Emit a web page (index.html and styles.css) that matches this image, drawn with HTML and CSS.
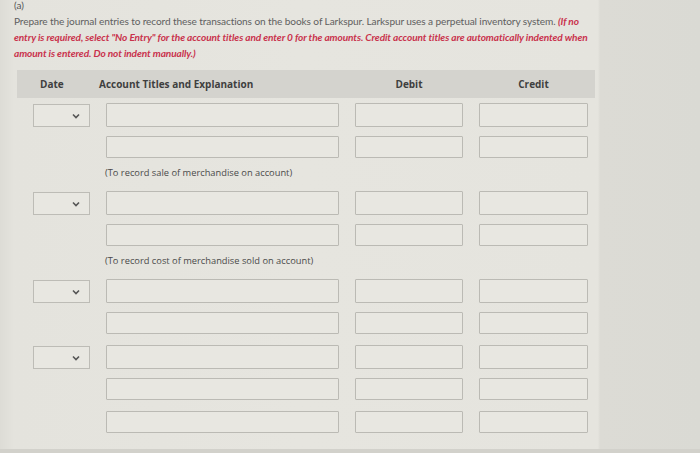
FILE: index.html
```html
<!DOCTYPE html>
<html>
<head>
<meta charset="utf-8">
<link rel="stylesheet" href="styles.css">
</head>
<body>
<div class="screen">
  <div class="page">
    <div class="part">(a)</div>
    <p class="instr">Prepare the journal entries to record these transactions on the books of Larkspur. Larkspur uses a perpetual inventory system. <em>(If no entry is required, select "No Entry" for the account titles and enter 0 for the amounts. Credit account titles are automatically indented when amount is entered. Do not indent manually.)</em></p>

    <div class="journal">
      <div class="head">
        <span class="h-date">Date</span>
        <span class="h-acct">Account Titles and Explanation</span>
        <span class="h-num">Debit</span>
        <span class="h-num">Credit</span>
      </div>

      <div class="row">
        <div class="sel"><svg width="8" height="6" viewBox="0 0 8 6"><path d="M1 1.5 L4 4.5 L7 1.5" fill="none" stroke="#555" stroke-width="1.6"/></svg></div>
        <div class="inp"></div><div class="inp"></div><div class="inp"></div>
      </div>
      <div class="row">
        <div></div>
        <div class="inp"></div><div class="inp"></div><div class="inp"></div>
      </div>
      <div class="expl">(To record sale of merchandise on account)</div>

      <div class="row">
        <div class="sel"><svg width="8" height="6" viewBox="0 0 8 6"><path d="M1 1.5 L4 4.5 L7 1.5" fill="none" stroke="#555" stroke-width="1.6"/></svg></div>
        <div class="inp"></div><div class="inp"></div><div class="inp"></div>
      </div>
      <div class="row">
        <div></div>
        <div class="inp"></div><div class="inp"></div><div class="inp"></div>
      </div>
      <div class="expl">(To record cost of merchandise sold on account)</div>

      <div class="row">
        <div class="sel"><svg width="8" height="6" viewBox="0 0 8 6"><path d="M1 1.5 L4 4.5 L7 1.5" fill="none" stroke="#555" stroke-width="1.6"/></svg></div>
        <div class="inp"></div><div class="inp"></div><div class="inp"></div>
      </div>
      <div class="row">
        <div></div>
        <div class="inp"></div><div class="inp"></div><div class="inp"></div>
      </div>
      <div class="row">
        <div class="sel"><svg width="8" height="6" viewBox="0 0 8 6"><path d="M1 1.5 L4 4.5 L7 1.5" fill="none" stroke="#555" stroke-width="1.6"/></svg></div>
        <div class="inp"></div><div class="inp"></div><div class="inp"></div>
      </div>
      <div class="row">
        <div></div>
        <div class="inp"></div><div class="inp"></div><div class="inp"></div>
      </div>
      <div class="row">
        <div></div>
        <div class="inp"></div><div class="inp"></div><div class="inp"></div>
      </div>
    </div>
  </div>
  <div class="edge"></div>
</div>
</body>
</html>
```
FILE: styles.css
```css
html, body {
  margin: 0;
  padding: 0;
}
body {
  width: 700px;
  height: 453px;
  overflow: hidden;
  background: #e3e2dc;
}
.screen {
  display: flex;
  height: 453px;
  background: linear-gradient(to right, #dddcd6 0, #e4e3dd 14px, #e6e5df 300px, #e5e4de 598px, #dcdbd5 600px, #dadad4 700px);
  border-bottom: 4px solid #d2d1cb;
  box-sizing: border-box;
}
.page {
  width: 600px;
  padding-left: 14px;
  box-sizing: border-box;
  font-family: Lato, "Liberation Sans", sans-serif;
}
.edge {
  flex: 1;
}
.part {
  font-size: 10px;
  line-height: 11px;
  color: #555;
  padding-top: 0;
}
.instr {
  margin: 2px 0 0;
  width: 586px;
  font-size: 10.1px;
  line-height: 16px;
  color: #606060;
  letter-spacing: -0.1px;
}
.instr em {
  color: #c9324c;
  font-weight: bold;
  font-style: italic;
}
.journal {
  margin-top: 9px;
  margin-left: 3px;
  width: 578px;
}
.head {
  display: grid;
  grid-template-columns: 73px 233px 108px 109px;
  column-gap: 16px;
  align-items: center;
  height: 28px;
  background: #d4d3ce;
  font-family: "Open Sans", "DejaVu Sans", sans-serif;
  font-weight: bold;
  font-size: 10px;
  color: #3f3f3f;
}
.h-date {
  padding-left: 23px;
}
.h-acct {
  margin-left: -7px;
}
.h-num {
  text-align: center;
}
.row {
  display: grid;
  grid-template-columns: 73px 233px 108px 109px;
  column-gap: 16px;
  height: 22px;
  margin-top: 11px;
}
.head + .row {
  margin-top: 5px;
}
.inp {
  border: 1px solid #bbbab4;
  background: #e8e7e1;
  border-radius: 1px;
}
.sel {
  justify-self: end;
  width: 57px;
  height: 23px;
  box-sizing: border-box;
  border: 1px solid #bdbcb6;
  background: #e8e7e1;
  display: flex;
  align-items: center;
  justify-content: flex-end;
  padding-right: 9px;
  margin-top: 1px;
}
.expl {
  margin-top: 8px;
  margin-left: 88px;
  line-height: 14px;
  font-family: "Open Sans", "DejaVu Sans", sans-serif;
  font-size: 9.3px;
  color: #4a4a4a;
}
```
